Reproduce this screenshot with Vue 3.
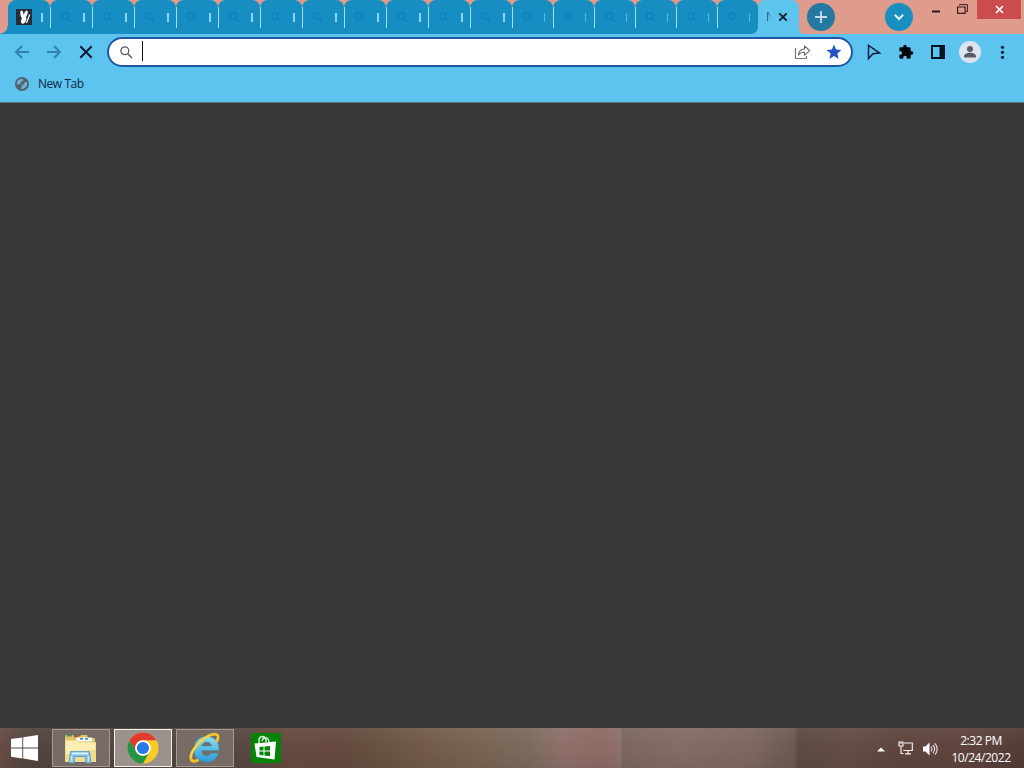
<script setup>
import { ref } from 'vue'

// the first tabs get one pixel more than the last ones
const tabs = ref(
  Array.from({ length: 18 }, (_, i) => ({
    id: i,
    kind: i === 0 ? 'site' : 'search',
    narrow: i > 11,
    round: [12, 13, 17].includes(i),
  }))
)

const address = ref('')
const time = '2:32 PM'
const date = '10/24/2022'
</script>

<template>
  <div class="screen">
    <header class="tab-strip">
      <div class="tabs">
        <div
          v-for="tab in tabs"
          :key="tab.id"
          class="tab"
          :class="{ narrow: tab.narrow, first: tab.id === 0 }"
        >
          <svg v-if="tab.kind === 'site'" class="favicon" viewBox="0 0 16 16">
            <rect width="16" height="16" fill="#252c35" />
            <path d="M5 1.500c2-.3 2.500 2 2.500 4.500C8.500 3.500 9.500 1 11 1.500c1.500 1 .8 4-1 6.500 1 2 0 4.500-2 6.500-2 .5-3.500-.5-3-2.500C5.200 11 5.500 10 6 9 4.500 8 3.500 2.500 5 1.500z" fill="#fff" />
            <path d="M13.700 5.500L10.500 14" stroke="#fff" stroke-width="1.300" />
          </svg>
          <svg v-else class="search-mark" viewBox="0 0 12 12">
            <circle cx="5" cy="5" r="3.200" />
            <path v-if="!tab.round" d="M7.500 7.500l3 3" />
          </svg>
          <span class="stub"></span>
        </div>
      </div>
      <div class="tab-active">
        <span class="tab-title">N</span>
        <svg width="10" height="10" viewBox="0 0 10 10">
          <path d="M1.300 1.300l7.400 7.400M8.700 1.300L1.300 8.700" stroke="#10212c" stroke-width="1.900" />
        </svg>
      </div>
      <svg class="flare" width="4" height="34" viewBox="0 0 4 34">
        <path d="M0 28q0 5 4 6H0z" fill="#5dc3ef" />
      </svg>
      <button class="round-btn new-tab" type="button">
        <svg width="14" height="14" viewBox="0 0 14 14">
          <path d="M7 1v12M1 7h12" stroke="#c5dde6" stroke-width="1.800" />
        </svg>
      </button>
      <button class="round-btn search-tabs" type="button">
        <svg width="12" height="12" viewBox="0 0 12 12">
          <path d="M1.800 3.800L6 8l4.200-4.200" fill="none" stroke="#e2f6ff" stroke-width="2" />
        </svg>
      </button>
      <div class="window-controls">
        <svg class="minimize" width="8" height="3" viewBox="0 0 8 3">
          <rect y=".5" width="8" height="2" fill="#2c1c18" />
        </svg>
        <svg class="restore" width="11" height="10" viewBox="0 0 11 10">
          <path d="M2.500 1.500V.6h7.900v7H9" fill="none" stroke="#3a211c" />
          <path d="M.6 3h7.500v6.400H.6z" fill="none" stroke="#3a211c" stroke-width="1.200" />
        </svg>
        <button class="close" type="button">
          <svg width="9" height="9" viewBox="0 0 9 9">
            <path d="M1 1l7 7M8 1L1 8" stroke="#fff" stroke-width="1.700" />
          </svg>
        </button>
      </div>
    </header>

    <nav class="toolbar">
      <div class="nav-buttons">
        <svg viewBox="0 0 16 16">
          <path d="M15 8H2.500M8 2L2 8l6 6" fill="none" stroke="#2f83ad" stroke-width="1.900" />
        </svg>
        <svg viewBox="0 0 16 16">
          <path d="M1 8h12.500M8 2l6 6-6 6" fill="none" stroke="#2f83ad" stroke-width="1.900" />
        </svg>
        <svg viewBox="0 0 16 16">
          <path d="M2.300 2.300l11.400 11.400M13.700 2.300L2.300 13.700" stroke="#061b35" stroke-width="2" />
        </svg>
      </div>
      <div class="omnibox">
        <svg class="lens" width="13" height="13" viewBox="0 0 13 13">
          <circle cx="4.800" cy="4.800" r="3.900" fill="none" stroke="#555a5f" stroke-width="1.300" />
          <path d="M7.700 7.700l4.300 4.300" stroke="#555a5f" stroke-width="1.500" />
        </svg>
        <span class="address">{{ address }}</span>
        <svg class="share" width="17" height="16" viewBox="0 0 17 16">
          <path d="M1.500 4v10.500H12.500V12" fill="none" stroke="#777" stroke-width="1.200" />
          <path d="M10.500 2v3C6.500 5.300 4.800 7.500 4.500 11c1.500-2.200 3.300-2.700 6-2.700v2.900l5.300-4.600z" fill="none" stroke="#666" stroke-width="1.100" stroke-linejoin="round" />
        </svg>
        <svg class="star" width="16" height="16" viewBox="0 0 16 16">
          <path d="M8 .6l2.100 5 5.300.5-4 3.500 1.200 5.300L8 12.100l-4.600 2.800 1.200-5.300-4-3.500 5.300-.5z" fill="#1f54c2" />
        </svg>
      </div>
      <div class="actions">
        <svg width="16" height="18" viewBox="0 0 16 18">
          <path d="M2.500 2.500v13L7 10.700l6.500-.7z" fill="none" stroke="#0a1d40" stroke-width="1.500" />
        </svg>
        <svg width="16" height="16" viewBox="0 0 24 24">
          <path d="M20.500 11H19V7a2 2 0 0 0-2-2h-4V3.500a2.500 2.500 0 0 0-5 0V5H4a2 2 0 0 0-2 2v3.800h1.500a2.700 2.700 0 0 1 0 5.400H2V20a2 2 0 0 0 2 2h3.800v-1.500a2.700 2.700 0 0 1 5.400 0V22H17a2 2 0 0 0 2-2v-4h1.500a2.500 2.500 0 0 0 0-5z" fill="#04070b" />
        </svg>
        <svg width="16" height="16" viewBox="0 0 16 16">
          <path d="M1 1h14v14H1zM3 3v10h6.500V3z" fill="#051222" fill-rule="evenodd" />
        </svg>
        <svg class="avatar" viewBox="0 0 22 22">
          <circle cx="11" cy="11" r="11" fill="#dce5ef" />
          <circle cx="11" cy="8" r="3" fill="#5b5b69" />
          <path d="M5 16.500v-1.200c0-2.300 3-3.500 6-3.500s6 1.200 6 3.500v1.200z" fill="#5b5b69" />
        </svg>
        <svg width="16" height="16" viewBox="0 0 16 16" fill="#0b2236">
          <circle cx="8.500" cy="3.300" r="1.600" />
          <circle cx="8.500" cy="8.300" r="1.600" />
          <circle cx="8.500" cy="13.300" r="1.600" />
        </svg>
      </div>
    </nav>

    <div class="bookmarks">
      <svg width="14" height="14" viewBox="0 0 14 14">
        <circle cx="7" cy="7" r="7" fill="#52616e" />
        <path d="M1.800 7C1.800 4 4 1.800 7 1.700L8.500 3 7 4.500H5.500v1.700L4.300 7.500z" fill="#6fb4d8" />
        <path d="M6.200 7.800l3-.3V5.500l2.700-.7c.9 3-.8 6.600-4.700 7.300L5.500 11l2-1.300z" fill="#6fb4d8" />
      </svg>
      <span>New Tab</span>
    </div>

    <main class="page"></main>

    <footer class="taskbar">
      <div class="start">
        <svg width="27" height="26" viewBox="0 0 27 26">
          <path d="M0 4l11.300-1.600v10H0zM12.200 2.300L27 0v12.400H12.200zM0 13.400h11.300v10L0 21.800zM12.200 13.400H27V26l-14.800-2.400z" fill="#fff" />
        </svg>
      </div>
      <div class="task">
        <svg width="34" height="32" viewBox="0 0 34 32">
          <path d="M1 5l1-2h7l1 1.500h6L17 3h6l1 3h7v22H1z" fill="#dcc36c" />
          <path d="M3 3.500h5" stroke="#449447" stroke-width="1.800" />
          <path d="M10 4.500h4" stroke="#b84d35" stroke-width="1.800" />
          <path d="M12 5.500h16v4H12z" fill="#f7fafa" />
          <path d="M16 6.800h3M21 7h3" stroke="#377fb9" stroke-width="1.500" />
          <path d="M1 8h12l2 2h17v20H1z" fill="#f1dc8d" />
          <path d="M2 9h11l2 2h16v6L2 23z" fill="#faeeb5" />
          <path d="M5 31l1.500-11.500h19L27 31h-5.500v-6.500h-11V31z" fill="#7ec0e8" stroke="#5798c2" stroke-width=".8" />
          <path d="M8 20.500h16l.5 2h-17z" fill="#d4effa" />
          <path d="M7.500 24v5.500M24.500 24v5.500" stroke="#c4e9f8" stroke-width="1.500" />
        </svg>
      </div>
      <div class="task current">
        <svg width="32" height="32" viewBox="0 0 32 32">
          <circle cx="16" cy="16" r="15.500" fill="#f9ca28" />
          <path d="M2.600 8.200A15.500 15.500 0 0 1 29.400 8.200H16a7.800 7.800 0 0 0-6.800 11.700z" fill="#df3b2e" />
          <path d="M2.600 8.200A15.500 15.500 0 0 0 16 31.500l6.700-11.700A7.800 7.800 0 0 1 9.300 19.900z" fill="#259447" />
          <circle cx="16" cy="16" r="7.800" fill="#fff" />
          <circle cx="16" cy="16" r="6.100" fill="#2878e6" />
        </svg>
      </div>
      <div class="task">
        <svg width="32" height="32" viewBox="0 0 32 32">
          <defs>
            <linearGradient id="ieBlue" x1="0" y1="0" x2="0" y2="1">
              <stop offset="0" stop-color="#8ee1fa" />
              <stop offset="1" stop-color="#279bd5" />
            </linearGradient>
          </defs>
          <path d="M30 18.500H12.500c.5 6 7 7 9.500 2.800h7.300C27 28 22 30.500 17 30 9.500 29.500 5 24.500 5 17.500 5 9.500 10.500 4.500 17.500 4.500 25.500 4.500 30.500 10 30 18.500zM12.700 14h9.800c-.5-5-8.800-5.500-9.800 0z" fill="url(#ieBlue)" stroke="#2f99c8" stroke-width=".5" fill-rule="evenodd" />
          <path d="M27.500 10C31 3.500 28.500 .5 21.500 3 11 7.500 1.500 19 1.800 26c.2 4 3.700 4 7.700 1.800" fill="none" stroke="#f3c52c" stroke-width="2.900" />
          <path d="M20 3.500C11 8 3 17.500 1.600 25" fill="none" stroke="#ffe583" stroke-width=".8" />
        </svg>
      </div>
      <div class="store">
        <svg width="30" height="30" viewBox="0 0 30 30">
          <rect width="30" height="30" fill="#048407" />
          <path d="M8 10V7.500C8 2.500 14 2 15 7v2M11 8c1-5 6.500-4 7 1" fill="none" stroke="#d8f2d8" stroke-width="1.400" />
          <path d="M3.500 10.500l21.500-2-1.500 18L5.500 24z" fill="#fff" />
          <path d="M8.500 14l4-.4v4h-4zM13.500 13.500l5.500-.6v4.700h-5.500zM8.500 18.500h4v4l-4-.5zM13.500 18.500H19v4.800l-5.500-.7z" fill="#048407" />
        </svg>
      </div>
      <div class="tray">
        <svg class="arrow" width="8" height="5" viewBox="0 0 8 5">
          <path d="M4 .5L8 4.500H0z" fill="#fff" />
        </svg>
        <svg class="network" width="16" height="14" viewBox="0 0 16 14" fill="none" stroke="#f6eeee" stroke-width="1.200">
          <path d="M6 2h8.300v7.500H5.200M7 12.800h6M10 10v2.800" />
          <path d="M1 1h4v4H1zM3 5v7.500h2.500M3 1v2" />
        </svg>
        <svg class="volume" width="16" height="14" viewBox="0 0 16 14">
          <path d="M1 4.500h2.500L7.500.5v13L3.500 9.500H1z" fill="#fff" />
          <path d="M9 4.500q2 2.500 0 5M11 2.800q3.300 4.200 0 8.400M13 1.300q4.400 5.700 0 11.400" fill="none" stroke="#eadfdd" stroke-width="1.100" />
        </svg>
        <div class="clock">
          <span>{{ time }}</span>
          <span>{{ date }}</span>
        </div>
      </div>
    </footer>
  </div>
</template>

<style>
body {
  overflow: hidden;
}
</style>

<style scoped>
.screen {
  display: flex;
  flex-direction: column;
  width: 1024px;
  height: 768px;
  overflow: hidden;
  background: #383838;
  font-family: 'Open Sans', 'Noto Sans', sans-serif;
}

.screen svg {
  display: block;
  flex: none;
}

button {
  border: none;
  padding: 0;
}

.tab-strip {
  display: flex;
  height: 34px;
  background: #df9b8b;
}

.tabs {
  display: flex;
  height: 34px;
  padding-left: 8px;
  /* foot of the first tab, then the strip under the last tab's corner */
  background:
    radial-gradient(circle at 0 0, transparent 7px, #168ec2 8px) 0 26px / 8px 8px no-repeat,
    linear-gradient(#5dc3ef, #5dc3ef) 100% 100% / 12px 12px no-repeat;
}

.tab {
  display: flex;
  align-items: center;
  box-sizing: border-box;
  width: 42px;
  height: 34px;
  padding-left: 10px;
  border-radius: 8px 8px 0 0;
  background:
    linear-gradient(#a0e5fb, #a0e5fb) 0 7px / 1px 21px no-repeat,
    #168ec2;
}

.tab.narrow {
  width: 41px;
}

.tab.first {
  padding-left: 8px;
  background: #168ec2;
}

.tab:last-child {
  border-bottom-right-radius: 7px;
}

.favicon {
  width: 16px;
  height: 16px;
}

.search-mark {
  width: 12px;
  height: 12px;
  fill: none;
  stroke: #0c80bb;
  stroke-width: 1.2;
}

.stub {
  width: 2px;
  height: 9px;
  margin-left: 11px;
  background: #8bd5ee;
}

.tab.first .stub {
  margin-left: 9px;
}

.narrow .stub {
  width: 1px;
  margin-left: 10px;
  background: #55b8df;
}

.tab-active {
  display: flex;
  align-items: center;
  box-sizing: border-box;
  width: 41px;
  height: 34px;
  padding-left: 8px;
  border-radius: 7px 8px 0 0;
  background: #5dc3ef;
}

/* the title fades out before the close button */
.tab-title {
  width: 10px;
  margin-right: 2px;
  font-size: 12px;
  line-height: 16px;
  color: #1d4f68;
  mask-image: linear-gradient(to right, #000 1px, transparent 6px);
}

.flare {
  margin-right: -4px;
}

.round-btn {
  display: grid;
  place-items: center;
  width: 28px;
  height: 28px;
  margin-top: 3px;
  border-radius: 50%;
}

.new-tab {
  margin-left: 8px;
  background: #23799f;
}

.search-tabs {
  margin-left: 50px;
  background: #188fc1;
}

.window-controls {
  display: flex;
  margin-left: auto;
}

.minimize {
  margin: 10px 17px 0 0;
}

.restore {
  margin: 4px 9px 0 0;
}

.close {
  display: grid;
  place-items: center;
  width: 44px;
  height: 19px;
  margin-right: 3px;
  background: #cb4c4d;
}

.toolbar {
  display: flex;
  align-items: center;
  height: 36px;
  background: #5dc3ef;
}

.nav-buttons {
  display: flex;
  gap: 16px;
  width: 93px;
  padding-left: 14px;
}

.nav-buttons svg {
  width: 16px;
  height: 16px;
}

.omnibox {
  display: flex;
  align-items: center;
  box-sizing: border-box;
  width: 746px;
  height: 30px;
  padding: 0 9px 0 11px;
  border: 2px solid #2058a8;
  border-radius: 15px;
  background: #fff;
}

.address {
  flex: 1;
  height: 20px;
  margin: -2px 0 0 9px;
  border-left: 1px solid #111;
}

.star {
  margin-left: 15px;
}

.actions {
  display: flex;
  align-items: center;
  gap: 16px;
  padding-left: 13px;
}

.avatar {
  width: 22px;
  height: 22px;
  margin: 0 -3px;
}

.bookmarks {
  display: flex;
  align-items: center;
  box-sizing: border-box;
  height: 33px;
  padding: 0 0 5px 15px;
  border-bottom: 1px solid #5a7480;
  background: #5dc3ef;
  gap: 9px;
  font-size: 12px;
  letter-spacing: -0.45px;
  color: #0b2c42;
}

.page {
  flex: 1;
  background: #383838;
}

.taskbar {
  display: flex;
  height: 40px;
  background:
    linear-gradient(rgba(255, 255, 255, 0.05), transparent 50%, rgba(0, 0, 0, 0.06)),
    linear-gradient(
      to right,
      #684c43 0,
      #52443f 30px,
      #554640 230px,
      #664a40 290px,
      #66483f 340px,
      #65503f 370px,
      #745b4b 430px,
      #776451 480px,
      #7b6b5e 530px,
      #8e7069 562px,
      #8c6b64 600px,
      #8f6f69 621px,
      #7a675f 622px,
      #836c65 680px,
      #7c6860 750px,
      #6c5a50 794px,
      #5b4b42 798px,
      #654c44 850px,
      #5e453e 900px,
      #60443e 960px,
      #523c37 1024px
    );
}

.start {
  display: grid;
  place-items: center;
  width: 48px;
  padding-right: 4px;
}

.start svg {
  margin-left: 1px;
}

.task {
  display: grid;
  place-items: center;
  box-sizing: border-box;
  width: 58px;
  height: 38px;
  margin: 1px 4px 0 0;
  border: 1px solid #a59b96;
  background: #776b65;
}

.task.current {
  border-color: #f2efed;
  background: #9b928e;
}

.store {
  padding: 5px 0 0 13px;
}

.tray {
  display: flex;
  align-items: center;
  margin-left: auto;
  padding-right: 14px;
}

.arrow {
  margin: 3px 13px 0 0;
}

.network {
  margin: 0 8px 0 0;
}

.volume {
  margin: 2px 14px 0 0;
}

.clock {
  display: flex;
  flex-direction: column;
  align-items: center;
  width: 58px;
  padding-top: 1px;
  font-size: 12px;
  line-height: 17px;
  letter-spacing: -0.45px;
  white-space: nowrap;
  color: #fff;
}
</style>
